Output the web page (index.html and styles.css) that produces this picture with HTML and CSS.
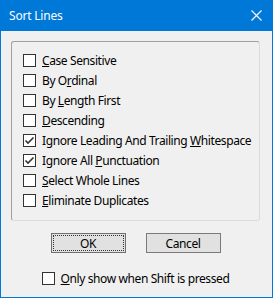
FILE: index.html
```html
<!DOCTYPE html>
<html lang="en">
<head>
    <meta charset="UTF-8">
    <title>Sort Lines</title>
    <link rel="stylesheet" href="styles.css">
</head>
<body>
    <div class="window">
        <div class="titlebar">
            <span class="title">Sort Lines</span>
            <svg class="close" width="11" height="11" viewBox="0 0 11 11">
                <path d="M0.5 0.5 L10.5 10.5 M10.5 0.5 L0.5 10.5" stroke="#fff" stroke-width="1.1"/>
            </svg>
        </div>
        <div class="content">
            <div class="group">
                <label class="check"><span class="box"></span><span><u>C</u>ase Sensitive</span></label>
                <label class="check"><span class="box"></span><span>By O<u>r</u>dinal</span></label>
                <label class="check"><span class="box"></span><span>By <u>L</u>ength First</span></label>
                <label class="check"><span class="box"></span><span><u>D</u>escending</span></label>
                <label class="check"><span class="box checked"></span><span>Ignore Leading And Trailing <u>W</u>hitespace</span></label>
                <label class="check"><span class="box checked"></span><span>Ignore All <u>P</u>unctuation</span></label>
                <label class="check"><span class="box"></span><span><u>S</u>elect Whole Lines</span></label>
                <label class="check"><span class="box"></span><span><u>E</u>liminate Duplicates</span></label>
            </div>
            <div class="buttons">
                <button class="btn default"><span>OK</span></button>
                <button class="btn">Cancel</button>
            </div>
            <div class="footer">
                <label class="check"><span class="box"></span><span><u>O</u>nly show when Shift is pressed</span></label>
            </div>
        </div>
    </div>
</body>
</html>
```

FILE: styles.css
```css
html, body {
    margin: 0;
    padding: 0;
}
body {
    font-family: "Noto Sans", "Open Sans", sans-serif;
    font-size: 12px;
    letter-spacing: -0.4px;
    color: #000;
    background: #f0f0f0;
}
.window {
    width: 273px;
    height: 298px;
    box-sizing: border-box;
    border: 1px solid #0078d7;
    border-top: none;
    background: #f0f0f0;
    display: flex;
    flex-direction: column;
}
.titlebar {
    height: 31px;
    margin: 0 -1px;
    background: #0078d7;
    color: #fff;
    display: flex;
    align-items: center;
    justify-content: space-between;
    padding: 0 11px 1px 9px;
    box-sizing: border-box;
}
.title {
    font-size: 12px;
    letter-spacing: -0.2px;
}
.close {
    display: block;
}
.content {
    flex: 1;
    display: flex;
    flex-direction: column;
    padding: 10px 12px 0 10px;
}
.group {
    height: 180px;
    box-sizing: border-box;
    border: 1px solid;
    border-color: #a0a0a0 #dcdcdc #dcdcdc #a0a0a0;
    border-radius: 3px;
    padding: 8px 0 0 11px;
    display: flex;
    flex-direction: column;
}
.check {
    height: 20px;
    display: flex;
    align-items: center;
    gap: 6px;
    white-space: nowrap;
}
.box {
    width: 13px;
    height: 13px;
    box-sizing: border-box;
    border: 1px solid #333;
    background: #fff;
    flex: none;
}
.box.checked {
    background: #fff url("data:image/svg+xml;utf8,<svg xmlns='http://www.w3.org/2000/svg' width='11' height='11' viewBox='0 0 11 11'><path d='M1.5 5.5 L4 8 L9.5 2.5' fill='none' stroke='%23333' stroke-width='1.6'/></svg>") no-repeat center;
}
u {
    text-decoration: underline;
    text-underline-offset: 1px;
}
.buttons {
    display: flex;
    justify-content: center;
    gap: 20px;
    margin-top: 12px;
}
.btn {
    width: 75px;
    height: 20px;
    box-sizing: border-box;
    font-family: inherit;
    font-size: 12px;
    letter-spacing: inherit;
    background: #e1e1e1;
    border: 1px solid #7a7a7a;
    padding: 0;
    color: #000;
}
.btn.default {
    border-color: #707070;
    padding: 1px;
}
.btn.default span {
    display: flex;
    align-items: center;
    justify-content: center;
    height: 100%;
    border: 1px dotted #333;
    box-sizing: border-box;
}
.footer {
    display: flex;
    justify-content: center;
    margin-top: 15px;
}
```
